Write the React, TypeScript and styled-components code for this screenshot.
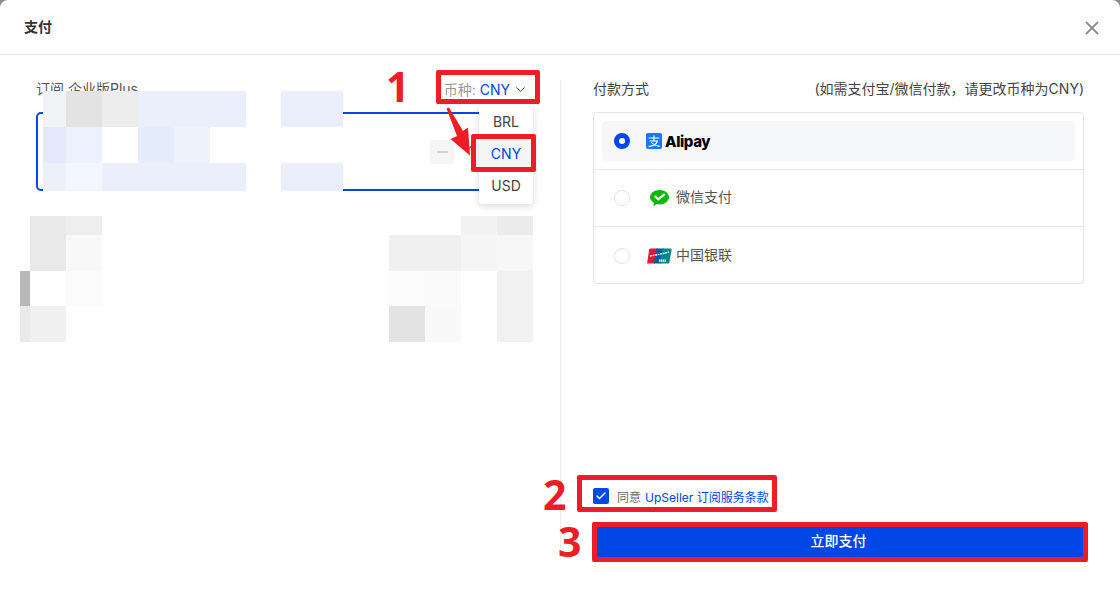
import styled, { createGlobalStyle } from 'styled-components';
import { ChevronDown, X, Check } from 'lucide-react';

const FONT = `Inter, "Noto Sans CJK SC", sans-serif`;

const GlobalStyle = createGlobalStyle`
  html, body {
    margin: 0;
    padding: 0;
    height: 591px;
    overflow: hidden;
    background: #8a8a8a;
  }
  * {
    box-sizing: border-box;
  }
`;

const topMosaic = {
  columns: '23px 36px 36px 36px 36px 36px 35px 62px',
  rows: '36px 36px 28px',
  cells: [
    '#f2f3f7', '#e3e3e3', '#ededed', '#ebeffb', '#ebeffb', '#ebeffb', '#ffffff', '#ebeffb',
    '#e3e9fa', '#ebf1fd', '#ffffff', '#e5edfb', '#eef2fd', '#ffffff', '#ffffff', '#ffffff',
    '#edf0fb', '#f3f6fe', '#ebeffb', '#ebeffb', '#ebeffb', '#ebeffb', '#ffffff', '#ebeffb',
  ],
};

const bottomMosaic = {
  columns: '10px 36px 36px 287px 36px 36px 36px 36px',
  rows: '19px 36px 35px 36px',
  cells: [
    '#ffffff', '#e9e9e9', '#eeeeee', '#ffffff', '#ffffff', '#ffffff', '#f2f2f2', '#ececec',
    '#ffffff', '#e9e9e9', '#f8f8f8', '#ffffff', '#f0f0f0', '#f0f0f0', '#f5f5f5', '#f6f6f6',
    '#b8b8b8', '#ffffff', '#fbfbfb', '#fefefe', '#fbfbfb', '#fafafa', '#ffffff', '#f1f1f1',
    '#e9e9e9', '#f0f0f0', '#ffffff', '#ffffff', '#e3e3e3', '#f9f9f9', '#ffffff', '#f1f1f1',
  ],
};

function AlipayIcon() {
  return (
    <AlipaySlot>
      <svg width="16" height="16" viewBox="0 0 16 16">
        <rect width="16" height="16" rx="2" fill="#1677ff" />
        <path
          d="M2.6 5h10.8M8 2.4V8M3.8 8h7.6C10.6 10.8 7.4 13 2.6 13.6M5 9.2c2 2.2 5 3.6 8.8 4.2"
          fill="none"
          stroke="#fff"
          strokeWidth="1.1"
        />
      </svg>
    </AlipaySlot>
  );
}

function WechatIcon() {
  return (
    <svg width="19" height="17" viewBox="0 0 19 17">
      <path
        d="M9.5 0C14.7 0 19 3.2 19 7.2c0 4-4.3 7.2-9.5 7.2-1.1 0-2.1-.1-3-.4L3.4 16.4l.5-3.7C1.5 11.4 0 9.4 0 7.2 0 3.2 4.3 0 9.5 0z"
        fill="#09bb07"
      />
      <path d="M5.2 6.6l2.9 2.7 6-4.6" fill="none" stroke="#fff" strokeWidth="2.1" strokeLinecap="round" strokeLinejoin="round" />
    </svg>
  );
}

function UnionPayIcon() {
  return (
    <svg width="25" height="16" viewBox="0 0 25 16">
      <path d="M3.2 0.6h7.5L8 15.6H1.2q-1.2 0-1-1.2L2.2 1.6q.2-1 1-1z" fill="#e21836" />
      <path d="M9.4 0.6h7.5L14.2 15.6H6.7z" fill="#00609f" />
      <path d="M15.6 0.6h8q1.2 0 1 1.2L22.4 14.6q-.2 1-1.2 1h-8.3z" fill="#00878a" />
      <path d="M3 8c3-.6 10-1.5 19-4" stroke="#fff" strokeWidth="1.3" strokeDasharray="2 .6" fill="none" />
      <path d="M12 12.6h7" stroke="#fff" strokeWidth="2.2" strokeDasharray="1.4 .5" fill="none" />
    </svg>
  );
}

function Mosaic(props: { left: number; top: number; data: typeof topMosaic }) {
  return (
    <MosaicGrid $left={props.left} $top={props.top} $columns={props.data.columns} $rows={props.data.rows}>
      {props.data.cells.map((color, i) => (
        <MosaicCell key={i} $color={color} />
      ))}
    </MosaicGrid>
  );
}

export default function App() {
  return (
    <Modal>
      <GlobalStyle />
      <Header>
        <Title>支付</Title>
        <CloseButton>
          <X size={22} strokeWidth={2} />
        </CloseButton>
      </Header>
      <Body>
        <LeftPane>
          <LeftHead>
            <PlanLabel>订阅 企业版Plus</PlanLabel>
            <CurrencySelect>
              <CurrencyLabel>币种:</CurrencyLabel>
              <CurrencyValue>CNY</CurrencyValue>
              <ChevronDown size={15} color="#0047e5" strokeWidth={1.6} />
              <Dropdown>
                <DropdownItem>BRL</DropdownItem>
                <DropdownItem $active>CNY</DropdownItem>
                <DropdownItem>USD</DropdownItem>
              </Dropdown>
            </CurrencySelect>
          </LeftHead>
          <PlanCard>
            <Stepper>
              <StepButton>
                <StepDash />
              </StepButton>
              <StepValue>1</StepValue>
            </Stepper>
          </PlanCard>
        </LeftPane>
        <RightPane>
          <RightHead>
            <HeadText>付款方式</HeadText>
            <HeadText>(如需支付宝/微信付款，请更改币种为CNY)</HeadText>
          </RightHead>
          <MethodList>
            <MethodRow>
              <MethodInner $active>
                <Radio $checked />
                <AlipayIcon />
                <AlipayWord>Alipay</AlipayWord>
              </MethodInner>
            </MethodRow>
            <MethodRow>
              <MethodInner>
                <Radio />
                <WechatSlot>
                  <WechatIcon />
                </WechatSlot>
                <MethodName>微信支付</MethodName>
              </MethodInner>
            </MethodRow>
            <MethodRow>
              <MethodInner>
                <Radio />
                <UnionSlot>
                  <UnionPayIcon />
                </UnionSlot>
                <MethodName>中国银联</MethodName>
              </MethodInner>
            </MethodRow>
          </MethodList>
          <Footer>
            <AgreeRow>
              <CheckBox>
                <Check size={12} color="#fff" strokeWidth={3} />
              </CheckBox>
              <AgreeText>同意</AgreeText>
              <AgreeLink>UpSeller 订阅服务条款</AgreeLink>
            </AgreeRow>
            <PayButton>立即支付</PayButton>
          </Footer>
        </RightPane>
      </Body>

      <Mosaic left={43} top={91} data={topMosaic} />
      <Mosaic left={20} top={216} data={bottomMosaic} />

      <RedBox $left={436} $top={70} $width={104} $height={34} />
      <RedBox $left={471} $top={134} $width={65} $height={38} />
      <RedBox $left={577} $top={475} $width={200} $height={37} />
      <RedBox $left={592} $top={522} $width={496} $height={40} />

      <StepNumber $left={386} $top={57}>1</StepNumber>
      <StepNumber $left={543} $top={465}>2</StepNumber>
      <StepNumber $left={558} $top={512}>3</StepNumber>

      <ArrowMark width="32" height="52" viewBox="0 0 32 52">
        <path d="M0.5 1.5L3 0.5L17 24L22 20.5L24 48.5L4.5 32L11 29z" fill="#ee1c25" />
      </ArrowMark>
    </Modal>
  );
}

const Modal = styled.div`
  position: relative;
  width: 1120px;
  height: 591px;
  background: #ffffff;
  border-radius: 8px 8px 0 0;
  font-family: ${FONT};
  overflow: hidden;
`;

const Header = styled.header`
  display: flex;
  align-items: center;
  justify-content: space-between;
  height: 55px;
  padding: 0 17px 0 24px;
  border-bottom: 1px solid #e8e8e8;
`;

const Title = styled.h1`
  margin: 0;
  font-size: 14px;
  line-height: 18px;
  font-weight: 700;
  color: #333333;
`;

const CloseButton = styled.div`
  display: flex;
  margin-top: 2px;
  color: #8c8c8c;
`;

const Body = styled.main`
  display: flex;
  height: 536px;
  padding: 25px 36px 31px 0;
`;

const LeftPane = styled.section`
  width: 561px;
  padding: 0 27px 0 36px;
  border-right: 1px solid #eeeeee;
`;

const LeftHead = styled.div`
  display: flex;
  align-items: center;
  justify-content: space-between;
  height: 18px;
  margin-bottom: 14px;
`;

const PlanLabel = styled.span`
  font-size: 14px;
  line-height: 18px;
  color: #555555;
`;

const CurrencySelect = styled.div`
  position: relative;
  display: flex;
  align-items: center;
  gap: 3px;
  margin-right: 5px;
  font-size: 14px;
`;

const CurrencyLabel = styled.span`
  color: #999999;
`;

const CurrencyValue = styled.span`
  color: #0047e5;
  margin-left: 1px;
`;

const Dropdown = styled.ul`
  position: absolute;
  top: 25px;
  right: -5px;
  width: 54px;
  height: 100px;
  margin: 0;
  padding: 0 0 2px;
  list-style: none;
  background: #ffffff;
  border-radius: 4px;
  box-shadow: 0 2px 8px rgba(0, 0, 0, 0.15);
  z-index: 2;
  display: flex;
  flex-direction: column;
  justify-content: flex-end;
`;

const DropdownItem = styled.li<{ $active?: boolean }>`
  height: 32px;
  line-height: 32px;
  text-align: center;
  font-size: 14px;
  color: ${({ $active }) => ($active ? '#0047e5' : '#444444')};
  background: ${({ $active }) => ($active ? '#f5f5f5' : 'transparent')};
`;

const PlanCard = styled.div`
  display: flex;
  align-items: center;
  justify-content: flex-end;
  height: 79px;
  border: 2px solid #0047e5;
  border-radius: 5px;
`;

const Stepper = styled.div`
  display: flex;
  align-items: center;
  gap: 14px;
  padding-right: 53px;
`;

const StepButton = styled.div`
  display: flex;
  align-items: center;
  justify-content: center;
  width: 24px;
  height: 24px;
  background: #f5f5f5;
  border-radius: 3px;
`;

const StepDash = styled.span`
  width: 11px;
  height: 2px;
  background: #d2d2d2;
`;

const StepValue = styled.span`
  width: 10px;
  font-size: 14px;
  color: #555555;
`;

const RightPane = styled.section`
  flex: 1;
  display: flex;
  flex-direction: column;
  padding-left: 32px;
`;

const RightHead = styled.div`
  display: flex;
  justify-content: space-between;
  align-items: center;
  height: 18px;
  margin-bottom: 14px;
`;

const HeadText = styled.span`
  font-size: 14px;
  line-height: 18px;
  color: #444444;
`;

const MethodList = styled.div`
  height: 172px;
  border: 1px solid #e5e5e5;
  border-radius: 4px;
`;

const MethodRow = styled.div`
  display: flex;
  align-items: center;
  height: 57px;
  padding: 0 8px;
  border-bottom: 1px solid #e5e5e5;
  &:last-child {
    border-bottom: none;
  }
`;

const MethodInner = styled.div<{ $active?: boolean }>`
  flex: 1;
  display: flex;
  align-items: center;
  height: 40px;
  padding-left: 12px;
  background: ${({ $active }) => ($active ? '#f6f7f9' : 'transparent')};
  border-radius: 4px;
`;

const Radio = styled.span<{ $checked?: boolean }>`
  flex: none;
  width: 16px;
  height: 16px;
  margin-right: 16px;
  border-radius: 50%;
  background: #ffffff;
  border: ${({ $checked }) => ($checked ? '5px solid #0047e5' : '1px solid #e3e3e3')};
`;

const AlipaySlot = styled.span`
  display: flex;
  margin-right: 3px;
`;

const AlipayWord = styled.span`
  font-size: 15px;
  font-weight: 800;
  letter-spacing: -0.4px;
  color: #000000;
`;

const WechatSlot = styled.span`
  display: flex;
  margin: 0 7px 0 4px;
`;

const UnionSlot = styled.span`
  display: flex;
  margin: 0 4px 0 1px;
`;

const MethodName = styled.span`
  font-size: 14px;
  line-height: 18px;
  margin-top: -2px;
  color: #555555;
`;

const Footer = styled.footer`
  margin-top: auto;
  display: flex;
  flex-direction: column;
`;

const AgreeRow = styled.label`
  display: flex;
  align-items: center;
  height: 16px;
  margin-bottom: 18px;
  font-size: 12px;
`;

const CheckBox = styled.span`
  display: flex;
  align-items: center;
  justify-content: center;
  width: 16px;
  height: 16px;
  margin-right: 8px;
  background: #0047e5;
  border-radius: 2px;
`;

const AgreeText = styled.span`
  color: #666666;
  margin-right: 4px;
`;

const AgreeLink = styled.span`
  color: #0047e5;
`;

const PayButton = styled.button`
  height: 38px;
  padding: 0 0 3px;
  border: none;
  background: #0047e5;
  color: #ffffff;
  font-family: ${FONT};
  font-size: 14px;
  font-weight: 500;
`;

const MosaicGrid = styled.div<{ $left: number; $top: number; $columns: string; $rows: string }>`
  position: absolute;
  left: ${({ $left }) => $left}px;
  top: ${({ $top }) => $top}px;
  display: grid;
  grid-template-columns: ${({ $columns }) => $columns};
  grid-template-rows: ${({ $rows }) => $rows};
  z-index: 1;
`;

const MosaicCell = styled.div<{ $color: string }>`
  background: ${({ $color }) => $color};
`;

const RedBox = styled.div<{ $left: number; $top: number; $width: number; $height: number }>`
  position: absolute;
  left: ${({ $left }) => $left}px;
  top: ${({ $top }) => $top}px;
  width: ${({ $width }) => $width}px;
  height: ${({ $height }) => $height}px;
  border: 5px solid #ee1c25;
  border-radius: 2px;
  z-index: 3;
`;

const StepNumber = styled.span<{ $left: number; $top: number }>`
  position: absolute;
  left: ${({ $left }) => $left}px;
  top: ${({ $top }) => $top}px;
  font-family: "Open Sans", sans-serif;
  font-size: 41px;
  line-height: 58px;
  font-weight: 700;
  color: #ee1c25;
  z-index: 3;
`;

const ArrowMark = styled.svg`
  position: absolute;
  left: 446px;
  top: 107px;
  z-index: 3;
`;
